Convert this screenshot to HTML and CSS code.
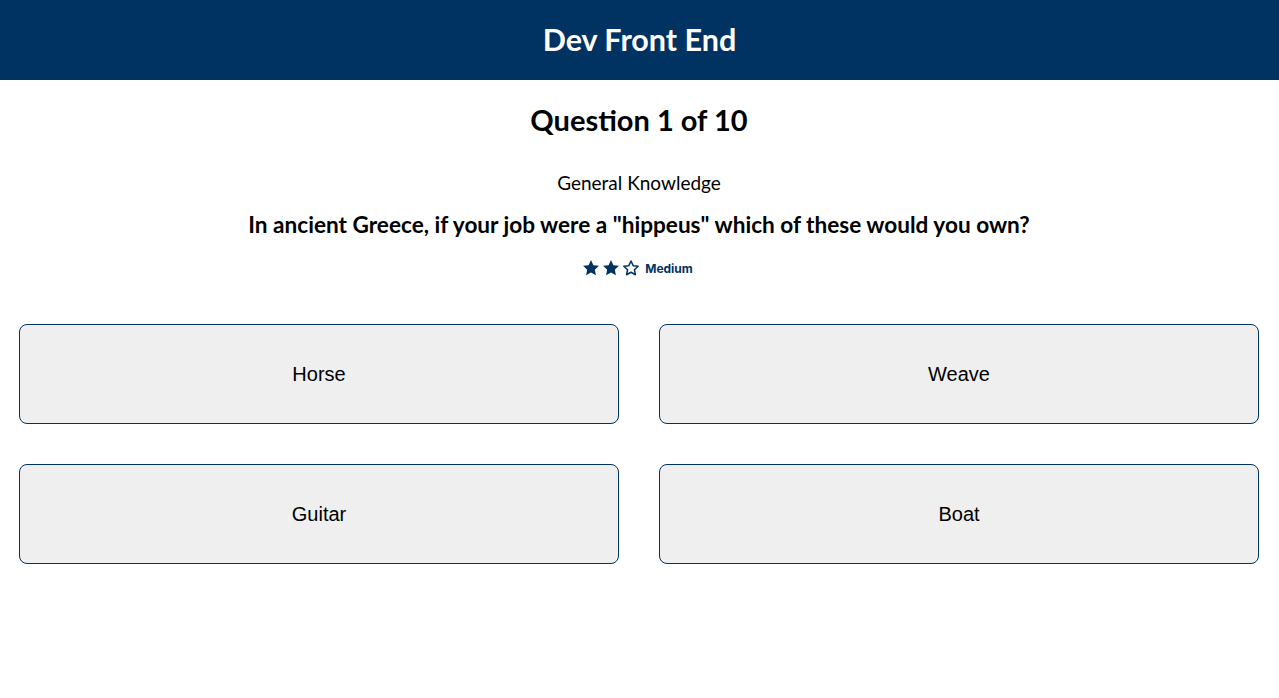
FILE: index.html
```html
<!DOCTYPE html>
<html>
<head>
<meta charset="utf-8">
<link rel="stylesheet" href="styles.css">
</head>
<body>
<header class="topbar"><h1 class="brand">Dev Front End</h1></header>
<main class="quiz">
  <h2 class="progress">Question 1 of 10</h2>
  <div class="category">General Knowledge</div>
  <div class="question">In ancient Greece, if your job were a "hippeus" which of these would you own?</div>
  <div class="difficulty">
    <svg class="star" viewBox="0 0 24 24"><path d="M12 2.5l2.9 6.1 6.6.8-4.9 4.6 1.3 6.6L12 17.3l-5.9 3.3 1.3-6.6L2.5 9.4l6.6-.8z" fill="#003262"/></svg>
    <svg class="star" viewBox="0 0 24 24"><path d="M12 2.5l2.9 6.1 6.6.8-4.9 4.6 1.3 6.6L12 17.3l-5.9 3.3 1.3-6.6L2.5 9.4l6.6-.8z" fill="#003262"/></svg>
    <svg class="star" viewBox="0 0 24 24"><path d="M12 3.6l2.6 5.6 6 .7-4.5 4.2 1.2 6L12 17.1l-5.3 3 1.2-6-4.5-4.2 6-.7z" fill="none" stroke="#003262" stroke-width="1.8" stroke-linejoin="round"/></svg>
    <span class="level">Medium</span>
  </div>
  <div class="answers">
    <button class="answer">Horse</button>
    <button class="answer">Weave</button>
    <button class="answer">Guitar</button>
    <button class="answer">Boat</button>
  </div>
</main>
</body>
</html>
```
FILE: styles.css
```css
html, body { margin: 0; padding: 0; background: #fff; }
body { font-family: "Lato", "Noto Sans", sans-serif; color: #000; }
.topbar {
  height: 80px;
  background: #003262;
  display: flex;
  align-items: center;
  justify-content: center;
}
.brand {
  margin: 0 0 2px;
  color: #fff;
  font-size: 30.5px;
  font-weight: 700;
}
.quiz { padding: 0 20px 0 19px; display: flex; flex-direction: column; align-items: center; }
.progress { margin: 23px 0 0; font-size: 29px; font-weight: 700; line-height: 34px; }
.category { margin-top: 34px; font-size: 19px; line-height: 24px; }
.question { margin-top: 17px; font-size: 22.6px; font-weight: 700; line-height: 26px; }
.difficulty { margin-top: 20px; display: flex; align-items: center; gap: 0; height: 20px; margin-right: 4px; }
.star { width: 20px; height: 20px; }
.level { margin-left: 4px; font-family: "Inter", sans-serif; font-weight: 700; font-size: 12px; color: #003262; }
.answers {
  align-self: stretch;
  margin-top: 46px;
  display: grid;
  grid-template-columns: 1fr 1fr;
  gap: 40px;
}
.answer {
  height: 100px;
  background: #efefef;
  border: 1px solid #003262;
  border-radius: 8px;
  font-family: "Liberation Sans", Arial, sans-serif;
  font-size: 20px;
  color: #000;
}
```
